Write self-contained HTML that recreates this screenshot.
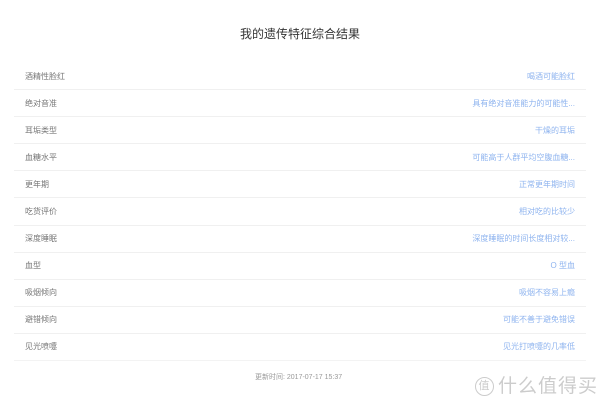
<!DOCTYPE html>
<html><head><meta charset="utf-8"><style>
body{margin:0;width:600px;height:400px;background:#fff;font-family:"Liberation Sans","Noto Sans CJK SC",sans-serif;position:relative;overflow:hidden}
h1{position:absolute;top:25px;left:0;width:600px;text-align:center;font-size:12px;font-weight:normal;color:#333;margin:0}
.list{position:absolute;top:63px;left:14px;width:572px}
.r{height:26.1px;border-bottom:1px solid #f0f0f0;display:flex;justify-content:space-between;align-items:center;font-size:8px;padding:0 11px;box-sizing:content-box}
.r span:first-child{color:#777}
.r span:last-child{color:#8fb4ef}
.last{border-bottom:1px solid #f3f3f3}
.ft{position:absolute;top:372px;left:255px;font-size:7px;color:#999}
.logo{position:absolute;top:371px;left:475px;font-size:19px;color:#ccc;letter-spacing:1px}
.logo b{display:inline-block;width:17px;height:17px;border:1.5px solid #ccc;border-radius:50%;font-size:11px;font-weight:normal;text-align:center;line-height:17px;vertical-align:middle;margin-right:4px}
</style></head><body>
<h1>我的遗传特征综合结果</h1>
<div class="list">
<div class="r"><span>酒精性脸红</span><span>喝酒可能脸红</span></div>
<div class="r"><span>绝对音准</span><span>具有绝对音准能力的可能性...</span></div>
<div class="r"><span>耳垢类型</span><span>干燥的耳垢</span></div>
<div class="r"><span>血糖水平</span><span>可能高于人群平均空腹血糖...</span></div>
<div class="r"><span>更年期</span><span>正常更年期时间</span></div>
<div class="r"><span>吃货评价</span><span>相对吃的比较少</span></div>
<div class="r"><span>深度睡眠</span><span>深度睡眠的时间长度相对较...</span></div>
<div class="r"><span>血型</span><span>O 型血</span></div>
<div class="r"><span>吸烟倾向</span><span>吸烟不容易上瘾</span></div>
<div class="r"><span>避错倾向</span><span>可能不善于避免错误</span></div>
<div class="r last"><span>见光喷嚏</span><span>见光打喷嚏的几率低</span></div>
</div>
<div class="ft">更新时间: 2017-07-17 15:37</div>
<div class="logo"><b>值</b>什么值得买</div>
</body></html>
